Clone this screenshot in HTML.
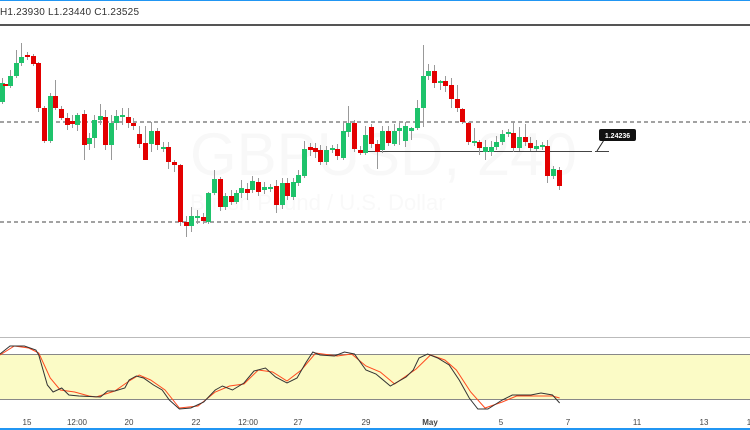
<!DOCTYPE html>
<html><head><meta charset="utf-8"><style>
html,body{margin:0;padding:0;background:#fff;width:750px;height:430px;overflow:hidden;font-family:"Liberation Sans",sans-serif}
</style></head><body>
<svg width="750" height="430" viewBox="0 0 750 430" xmlns="http://www.w3.org/2000/svg" font-family="Liberation Sans, sans-serif">
<rect x="0" y="0" width="750" height="430" fill="#fff"/>
<rect x="0" y="0" width="750" height="1" fill="#2196f3"/>
<text x="0" y="15" font-size="10" fill="#333" letter-spacing="0.2">H1.23930  L1.23440  C1.23525</text>
<rect x="0" y="24" width="750" height="2" fill="#555"/>
<text x="190" y="175" font-size="60" fill="#f8f8f8">GBPUSD, 240</text>
<text x="190" y="210" font-size="22" fill="#f9f9f9">British Pound / U.S. Dollar</text>
<line x1="0" y1="122" x2="750" y2="122" stroke="#444" stroke-dasharray="4,3" stroke-width="1"/>
<line x1="0" y1="222" x2="750" y2="222" stroke="#444" stroke-dasharray="4,3" stroke-width="1"/>
<line x1="363" y1="151.5" x2="592" y2="151.5" stroke="#444" stroke-width="1"/>
<line x1="595" y1="151.5" x2="609" y2="151.5" stroke="#444" stroke-width="1"/>
<line x1="597" y1="151" x2="604" y2="140" stroke="#222" stroke-width="1"/>
<rect x="599" y="129" width="37" height="12" rx="2" fill="#111"/>
<text x="617.5" y="138" font-size="7" fill="#fff" text-anchor="middle" font-weight="bold">1.24236</text>
<g stroke="#999" stroke-width="1">
<line x1="2.5" y1="78" x2="2.5" y2="104"/><line x1="10.5" y1="70" x2="10.5" y2="88"/><line x1="16.5" y1="50" x2="16.5" y2="78"/><line x1="21.5" y1="43" x2="21.5" y2="66"/><line x1="27.5" y1="52" x2="27.5" y2="60"/><line x1="33.5" y1="54" x2="33.5" y2="66"/><line x1="38.5" y1="62" x2="38.5" y2="112"/><line x1="44.5" y1="106" x2="44.5" y2="143"/><line x1="50.5" y1="93" x2="50.5" y2="143"/><line x1="55.5" y1="80" x2="55.5" y2="110"/><line x1="61.5" y1="106" x2="61.5" y2="120"/><line x1="67.5" y1="113" x2="67.5" y2="130"/><line x1="72.5" y1="115" x2="72.5" y2="128"/><line x1="77.5" y1="113" x2="77.5" y2="131"/><line x1="84.5" y1="110" x2="84.5" y2="160"/><line x1="89.5" y1="133" x2="89.5" y2="150"/><line x1="94.5" y1="115" x2="94.5" y2="148"/><line x1="100.5" y1="104" x2="100.5" y2="125"/><line x1="105.5" y1="110" x2="105.5" y2="150"/><line x1="111.5" y1="115" x2="111.5" y2="160"/><line x1="116.5" y1="110" x2="116.5" y2="130"/><line x1="122.5" y1="108" x2="122.5" y2="125"/><line x1="128.5" y1="108" x2="128.5" y2="128"/><line x1="133.5" y1="118" x2="133.5" y2="130"/><line x1="139.5" y1="126" x2="139.5" y2="148"/><line x1="145.5" y1="126" x2="145.5" y2="160"/><line x1="151.5" y1="122" x2="151.5" y2="152"/><line x1="157.5" y1="128" x2="157.5" y2="150"/><line x1="163.5" y1="142" x2="163.5" y2="152"/><line x1="168.5" y1="142" x2="168.5" y2="169"/><line x1="174.5" y1="160" x2="174.5" y2="172"/><line x1="180.5" y1="164" x2="180.5" y2="226"/><line x1="186.5" y1="216" x2="186.5" y2="237"/><line x1="191.5" y1="207" x2="191.5" y2="232"/><line x1="197.5" y1="210" x2="197.5" y2="224"/><line x1="203.5" y1="213" x2="203.5" y2="224"/><line x1="208.5" y1="192" x2="208.5" y2="224"/><line x1="214.5" y1="170" x2="214.5" y2="195"/><line x1="220.5" y1="177" x2="220.5" y2="211"/><line x1="225.5" y1="193" x2="225.5" y2="210"/><line x1="231.5" y1="190" x2="231.5" y2="205"/><line x1="236.5" y1="190" x2="236.5" y2="204"/><line x1="241.5" y1="180" x2="241.5" y2="198"/><line x1="247.5" y1="183" x2="247.5" y2="200"/><line x1="252.5" y1="176" x2="252.5" y2="193"/><line x1="258.5" y1="178" x2="258.5" y2="196"/><line x1="264.5" y1="182" x2="264.5" y2="194"/><line x1="270.5" y1="184" x2="270.5" y2="192"/><line x1="276.5" y1="180" x2="276.5" y2="213"/><line x1="282.5" y1="178" x2="282.5" y2="209"/><line x1="287.5" y1="178" x2="287.5" y2="200"/><line x1="293.5" y1="178" x2="293.5" y2="200"/><line x1="298.5" y1="170" x2="298.5" y2="186"/><line x1="304.5" y1="141" x2="304.5" y2="178"/><line x1="310.5" y1="143" x2="310.5" y2="156"/><line x1="315.5" y1="143" x2="315.5" y2="158"/><line x1="320.5" y1="145" x2="320.5" y2="165"/><line x1="326.5" y1="146" x2="326.5" y2="165"/><line x1="332.5" y1="145" x2="332.5" y2="153"/><line x1="337.5" y1="144" x2="337.5" y2="160"/><line x1="343.5" y1="122" x2="343.5" y2="160"/><line x1="348.5" y1="106" x2="348.5" y2="137"/><line x1="354.5" y1="120" x2="354.5" y2="152"/><line x1="360.5" y1="146" x2="360.5" y2="155"/><line x1="365.5" y1="126" x2="365.5" y2="155"/><line x1="371.5" y1="124" x2="371.5" y2="148"/><line x1="377.5" y1="140" x2="377.5" y2="169"/><line x1="382.5" y1="126" x2="382.5" y2="153"/><line x1="388.5" y1="126" x2="388.5" y2="146"/><line x1="394.5" y1="124" x2="394.5" y2="146"/><line x1="399.5" y1="123" x2="399.5" y2="145"/><line x1="405.5" y1="122" x2="405.5" y2="147"/><line x1="411.5" y1="127" x2="411.5" y2="140"/><line x1="417.5" y1="100" x2="417.5" y2="130"/><line x1="423.5" y1="45" x2="423.5" y2="127"/><line x1="428.5" y1="64" x2="428.5" y2="80"/><line x1="434.5" y1="65" x2="434.5" y2="88"/><line x1="440.5" y1="80" x2="440.5" y2="90"/><line x1="445.5" y1="76" x2="445.5" y2="92"/><line x1="451.5" y1="78" x2="451.5" y2="108"/><line x1="457.5" y1="85" x2="457.5" y2="112"/><line x1="462.5" y1="108" x2="462.5" y2="124"/><line x1="468.5" y1="122" x2="468.5" y2="145"/><line x1="474.5" y1="128" x2="474.5" y2="146"/><line x1="479.5" y1="140" x2="479.5" y2="155"/><line x1="485.5" y1="140" x2="485.5" y2="160"/><line x1="491.5" y1="141" x2="491.5" y2="156"/><line x1="496.5" y1="136" x2="496.5" y2="150"/><line x1="502.5" y1="130" x2="502.5" y2="145"/><line x1="508.5" y1="129" x2="508.5" y2="137"/><line x1="513.5" y1="122" x2="513.5" y2="152"/><line x1="519.5" y1="127" x2="519.5" y2="151"/><line x1="525.5" y1="124" x2="525.5" y2="146"/><line x1="530.5" y1="137" x2="530.5" y2="151"/><line x1="536.5" y1="140" x2="536.5" y2="151"/><line x1="542.5" y1="142" x2="542.5" y2="150"/><line x1="547.5" y1="140" x2="547.5" y2="183"/><line x1="553.5" y1="166" x2="553.5" y2="179"/><line x1="559.5" y1="167" x2="559.5" y2="190"/>
</g>
<g fill="#1ec36b">
<rect x="0" y="83" width="5" height="19"/><rect x="8" y="76" width="5" height="10"/><rect x="14" y="63" width="5" height="13"/><rect x="19" y="57" width="5" height="6"/><rect x="48" y="96" width="5" height="45"/><rect x="75" y="115" width="5" height="10"/><rect x="87" y="138" width="5" height="6"/><rect x="92" y="120" width="5" height="18"/><rect x="98" y="116" width="5" height="4"/><rect x="109" y="123" width="5" height="22"/><rect x="114" y="116" width="5" height="7"/><rect x="120" y="115" width="5" height="2"/><rect x="149" y="131" width="5" height="13"/><rect x="161" y="147" width="5" height="2"/><rect x="189" y="216" width="5" height="10"/><rect x="195" y="216" width="5" height="2"/><rect x="206" y="193" width="5" height="29"/><rect x="212" y="179" width="5" height="14"/><rect x="223" y="196" width="5" height="11"/><rect x="234" y="193" width="5" height="9"/><rect x="239" y="188" width="5" height="5"/><rect x="250" y="181" width="5" height="9"/><rect x="262" y="187" width="5" height="3"/><rect x="268" y="187" width="5" height="2"/><rect x="280" y="183" width="5" height="22"/><rect x="291" y="182" width="5" height="15"/><rect x="296" y="175" width="5" height="8"/><rect x="302" y="149" width="5" height="27"/><rect x="324" y="150" width="5" height="12"/><rect x="330" y="148" width="5" height="2"/><rect x="341" y="131" width="5" height="27"/><rect x="346" y="123" width="5" height="9"/><rect x="363" y="135" width="5" height="18"/><rect x="380" y="131" width="5" height="19"/><rect x="392" y="131" width="5" height="13"/><rect x="397" y="128" width="5" height="3"/><rect x="403" y="126" width="5" height="15"/><rect x="409" y="128" width="5" height="3"/><rect x="415" y="108" width="5" height="20"/><rect x="421" y="76" width="5" height="32"/><rect x="426" y="71" width="5" height="5"/><rect x="438" y="81" width="5" height="2"/><rect x="472" y="141" width="5" height="2"/><rect x="483" y="147" width="5" height="5"/><rect x="489" y="147" width="5" height="5"/><rect x="494" y="142" width="5" height="5"/><rect x="500" y="134" width="5" height="8"/><rect x="506" y="132" width="5" height="2"/><rect x="517" y="137" width="5" height="11"/><rect x="534" y="146" width="5" height="3"/><rect x="540" y="145" width="5" height="2"/><rect x="551" y="169" width="5" height="7"/>
</g>
<g fill="#e30000">
<rect x="3" y="84" width="5" height="2"/><rect x="25" y="55" width="5" height="2"/><rect x="31" y="56" width="5" height="8"/><rect x="36" y="63" width="5" height="45"/><rect x="42" y="108" width="5" height="33"/><rect x="53" y="96" width="5" height="12"/><rect x="59" y="109" width="5" height="9"/><rect x="65" y="118" width="5" height="7"/><rect x="70" y="121" width="5" height="3"/><rect x="82" y="114" width="5" height="31"/><rect x="103" y="117" width="5" height="28"/><rect x="126" y="117" width="5" height="6"/><rect x="131" y="123" width="5" height="3"/><rect x="137" y="134" width="5" height="10"/><rect x="143" y="143" width="5" height="17"/><rect x="155" y="131" width="5" height="14"/><rect x="166" y="147" width="5" height="15"/><rect x="172" y="162" width="5" height="3"/><rect x="178" y="165" width="5" height="57"/><rect x="184" y="222" width="5" height="4"/><rect x="201" y="217" width="5" height="4"/><rect x="218" y="179" width="5" height="28"/><rect x="229" y="196" width="5" height="6"/><rect x="245" y="189" width="5" height="4"/><rect x="256" y="182" width="5" height="10"/><rect x="274" y="186" width="5" height="19"/><rect x="285" y="183" width="5" height="13"/><rect x="308" y="147" width="5" height="3"/><rect x="313" y="148" width="5" height="4"/><rect x="318" y="150" width="5" height="12"/><rect x="335" y="149" width="5" height="7"/><rect x="352" y="123" width="5" height="26"/><rect x="358" y="150" width="5" height="3"/><rect x="369" y="127" width="5" height="17"/><rect x="375" y="144" width="5" height="8"/><rect x="386" y="131" width="5" height="12"/><rect x="432" y="71" width="5" height="12"/><rect x="443" y="81" width="5" height="5"/><rect x="449" y="85" width="5" height="14"/><rect x="455" y="99" width="5" height="9"/><rect x="460" y="109" width="5" height="13"/><rect x="466" y="123" width="5" height="19"/><rect x="477" y="142" width="5" height="6"/><rect x="511" y="133" width="5" height="15"/><rect x="523" y="137" width="5" height="5"/><rect x="528" y="143" width="5" height="5"/><rect x="545" y="146" width="5" height="30"/><rect x="557" y="170" width="5" height="16"/>
</g>
<rect x="0" y="337" width="750" height="1" fill="#bbb"/>
<rect x="0" y="354" width="750" height="45" fill="#fbfbc6"/>
<line x1="0" y1="354.5" x2="750" y2="354.5" stroke="#888" stroke-width="1"/>
<line x1="0" y1="399.5" x2="750" y2="399.5" stroke="#888" stroke-width="1"/>
<g transform="scale(1.435,1)" fill="none" stroke-width="1">
<polyline stroke="#ff4a1f" vector-effect="non-scaling-stroke" points="0,355 10,346 20,348 27,353 35,378 42,390 52,392 62,396 67,397 80,391 90,381 97,375 105,380 115,390 125,408 138,406 150,392 160,386 170,384 180,370 190,372 200,381 210,370 220,353 235,356 245,354 255,366 265,372 275,384 290,369 300,355 310,360 318,370 328,392 338,408 350,402 360,396 375,396 385,396 390,398"/>
<polyline stroke="#333" vector-effect="non-scaling-stroke" points="0,354 7,346 17,346 25,350 27,355 33,385 37,392 43,388 48,395 55,396 70,397 75,391 80,391 87,388 90,380 95,376 100,378 107,385 113,390 118,400 125,409 133,408 142,402 150,390 155,386 162,390 170,383 177,371 185,368 192,377 200,383 207,378 213,363 218,352 223,355 233,356 240,352 247,354 255,370 262,374 272,386 283,377 288,370 292,358 298,354 305,358 313,365 320,380 327,398 333,409 340,409 350,400 357,395 370,395 377,393 385,395 390,403"/>
</g>
<g font-size="8" fill="#444" text-anchor="middle">
<text x="27" y="425">15</text><text x="77" y="425">12:00</text><text x="129" y="425">20</text><text x="196" y="425">22</text><text x="248" y="425">12:00</text><text x="298" y="425">27</text><text x="366" y="425">29</text><text x="430" y="425" font-weight="bold">May</text><text x="501" y="425">5</text><text x="568" y="425">7</text><text x="637" y="425">11</text><text x="704" y="425">13</text><text x="749" y="425">1</text>
</g>
<rect x="0" y="428" width="750" height="2" fill="#2196f3"/>
</svg>
</body></html>
